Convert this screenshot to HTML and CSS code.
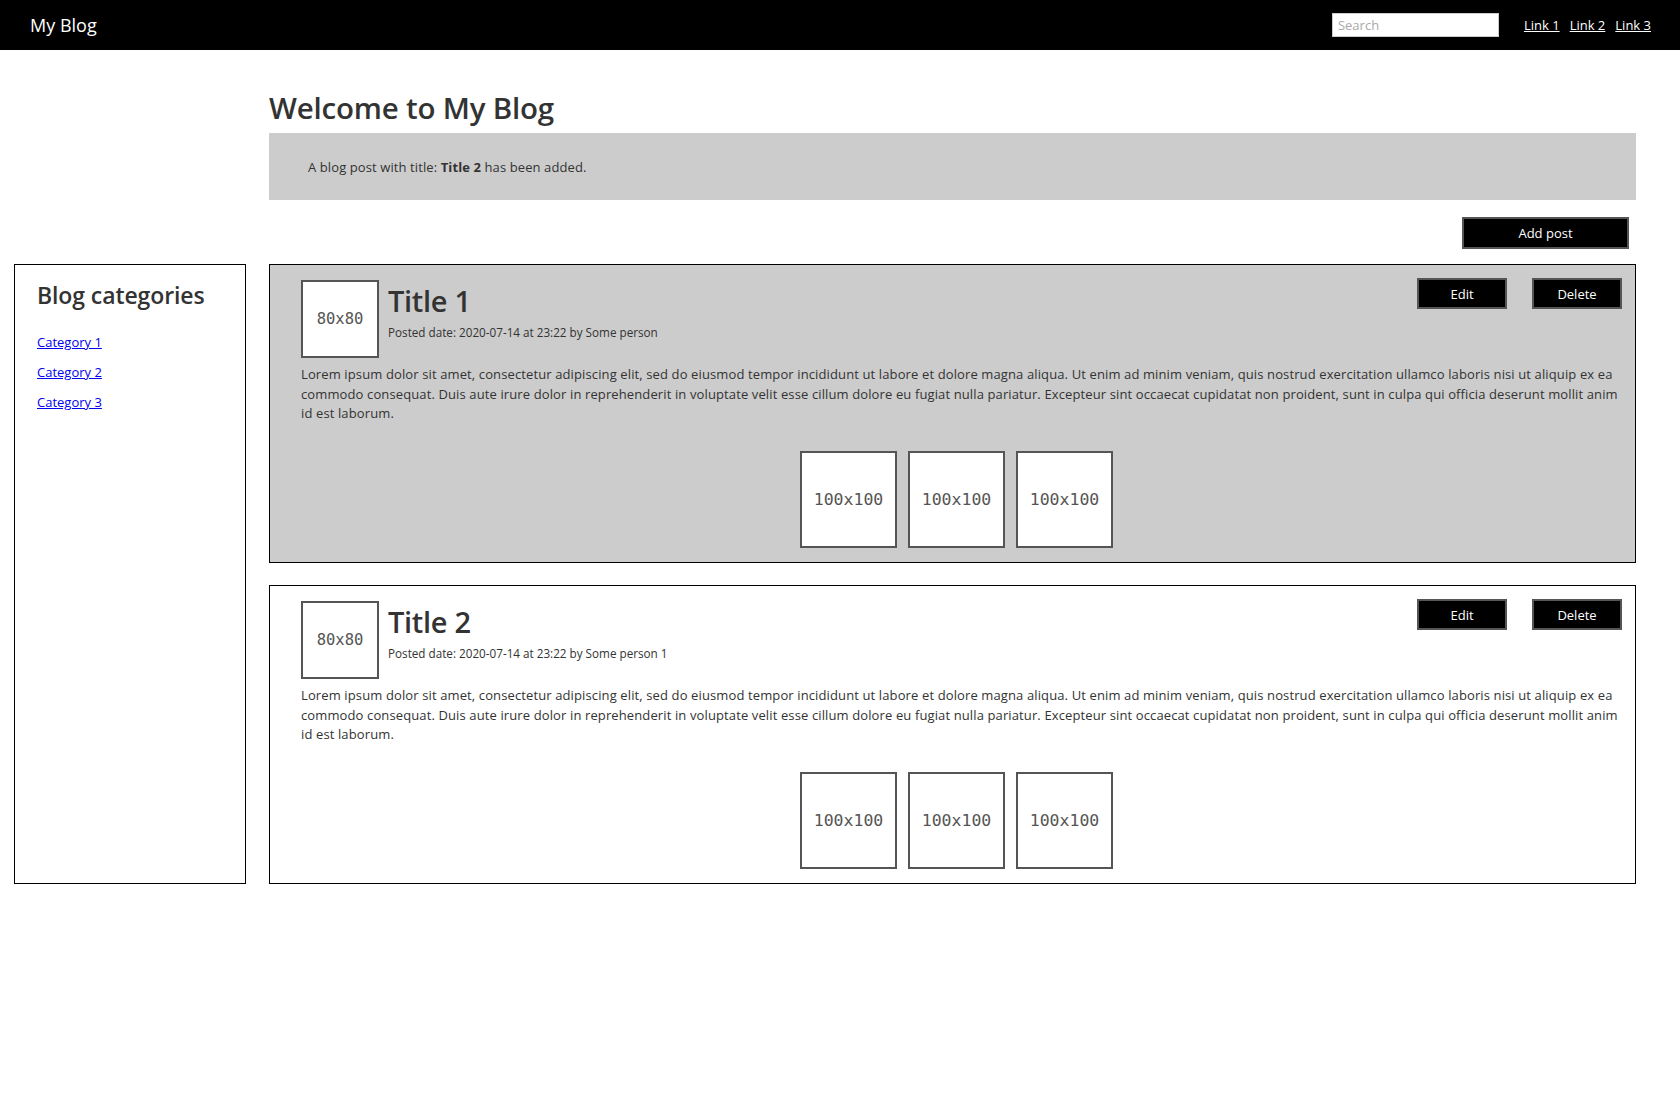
FILE: index.html
```html
<!DOCTYPE html>
<html lang="en">
<head>
<meta charset="utf-8">
<title>My Blog</title>
<link rel="stylesheet" href="styles.css">
</head>
<body>
<nav class="navbar">
  <a class="brand" href="#">My Blog</a>
  <div class="nav-right">
    <input class="search" type="text" placeholder="Search">
    <a class="nav-link" href="#">Link 1</a>
    <a class="nav-link" href="#">Link 2</a>
    <a class="nav-link" href="#">Link 3</a>
  </div>
</nav>
<div class="layout">
  <header class="page-head">
    <h1 class="page-title">Welcome to My Blog</h1>
    <div class="alert"><span>A blog post with title: <b>Title 2</b> has been added.</span></div>
    <div class="add-row"><button class="btn btn-add">Add post</button></div>
  </header>
  <aside class="sidebar">
    <h2 class="sidebar-title">Blog categories</h2>
    <ul class="cat-list">
      <li><a href="#">Category 1</a></li>
      <li><a href="#">Category 2</a></li>
      <li><a href="#">Category 3</a></li>
    </ul>
  </aside>
  <main class="posts">
    <article class="post post-active">
      <div class="post-head">
        <div class="thumb">80x80</div>
        <div class="post-meta">
          <h3 class="post-title">Title 1</h3>
          <div class="post-date">Posted date: 2020-07-14 at 23:22 by Some person</div>
        </div>
        <div class="post-actions">
          <button class="btn btn-small">Edit</button>
          <button class="btn btn-small">Delete</button>
        </div>
      </div>
      <p class="post-body">Lorem ipsum dolor sit amet, consectetur adipiscing elit, sed do eiusmod tempor incididunt ut labore et dolore magna aliqua. Ut enim ad minim veniam, quis nostrud exercitation ullamco laboris nisi ut aliquip ex ea commodo consequat. Duis aute irure dolor in reprehenderit in voluptate velit esse cillum dolore eu fugiat nulla pariatur. Excepteur sint occaecat cupidatat non proident, sunt in culpa qui officia deserunt mollit anim id est laborum.</p>
      <div class="gallery">
        <div class="pic">100x100</div>
        <div class="pic">100x100</div>
        <div class="pic">100x100</div>
      </div>
    </article>
    <article class="post">
      <div class="post-head">
        <div class="thumb">80x80</div>
        <div class="post-meta">
          <h3 class="post-title">Title 2</h3>
          <div class="post-date">Posted date: 2020-07-14 at 23:22 by Some person 1</div>
        </div>
        <div class="post-actions">
          <button class="btn btn-small">Edit</button>
          <button class="btn btn-small">Delete</button>
        </div>
      </div>
      <p class="post-body">Lorem ipsum dolor sit amet, consectetur adipiscing elit, sed do eiusmod tempor incididunt ut labore et dolore magna aliqua. Ut enim ad minim veniam, quis nostrud exercitation ullamco laboris nisi ut aliquip ex ea commodo consequat. Duis aute irure dolor in reprehenderit in voluptate velit esse cillum dolore eu fugiat nulla pariatur. Excepteur sint occaecat cupidatat non proident, sunt in culpa qui officia deserunt mollit anim id est laborum.</p>
      <div class="gallery">
        <div class="pic">100x100</div>
        <div class="pic">100x100</div>
        <div class="pic">100x100</div>
      </div>
    </article>
  </main>
</div>
</body>
</html>
```
FILE: styles.css
```css
* { box-sizing: border-box; }
body {
  margin: 0;
  font-family: "Open Sans", "Noto Sans", sans-serif;
  color: #333;
  background: #fff;
}
.navbar {
  height: 50px;
  background: #000;
  display: flex;
  align-items: center;
  justify-content: space-between;
  padding: 0 29px 0 30px;
}
.brand {
  color: #fff;
  text-decoration: none;
  font-size: 18px;
  line-height: 1;
}
.nav-right {
  display: flex;
  align-items: center;
  gap: 10px;
}
.search {
  width: 167px;
  height: 24px;
  border: 1px solid #ccc;
  padding: 0 5px;
  font-family: inherit;
  font-size: 13px;
  margin-right: 15px;
  outline: none;
}
.search::placeholder { color: #aaa; }
.nav-link {
  color: #fff;
  font-size: 13px;
}
.layout {
  display: grid;
  grid-template-columns: 232px 1fr;
  column-gap: 23px;
  padding: 0 44px 40px 14px;
}
.page-head { grid-column: 2; }
.page-title {
  margin: 0;
  padding-top: 33px;
  font-size: 29.5px;
  font-weight: 600;
  line-height: 50px;
  letter-spacing: -0.2px;
}
.alert {
  background: #ccc;
  height: 67px;
  padding-left: 39px;
  display: flex;
  align-items: center;
  font-size: 13px;
  letter-spacing: 0.1px;
}
.add-row {
  display: flex;
  justify-content: flex-end;
  padding: 17px 7px 15px 0;
}
.btn {
  background: #000;
  color: #fff;
  border: 2px solid #555;
  font-family: inherit;
  font-size: 13px;
  cursor: pointer;
}
.btn-add { width: 167px; height: 32px; }
.sidebar {
  border: 1px solid #000;
  padding: 14px 22px;
}
.sidebar-title {
  margin: 0;
  font-size: 23px;
  font-weight: 600;
  line-height: 32px;
  letter-spacing: -0.1px;
}
.cat-list {
  list-style: none;
  margin: 16px 0 0;
  padding: 0;
}
.cat-list li {
  font-size: 13px;
  line-height: 30px;
}
.cat-list a { color: #00e; }
.posts {
  display: flex;
  flex-direction: column;
  gap: 22px;
}
.post {
  border: 1px solid #000;
  height: 299px;
  padding: 14px 13px 14px 31px;
  display: flex;
  flex-direction: column;
}
.post-active { background: #ccc; }
.post-head {
  display: flex;
  align-items: flex-start;
}
.thumb {
  width: 78px;
  height: 78px;
  border: 2px solid #555;
  background: #fff;
  display: flex;
  align-items: center;
  justify-content: center;
  font-family: "DejaVu Sans Mono", "Liberation Mono", monospace;
  font-size: 15.5px;
  color: #555;
  margin-top: 1px;
}
.post-meta {
  flex: 1;
  margin-left: 9px;
}
.post-title {
  margin: 0;
  font-size: 29px;
  font-weight: 600;
  line-height: 40px;
  padding-top: 2px;
  letter-spacing: -0.3px;
}
.post-date {
  font-size: 11.7px;
  margin-top: 3px;
}
.post-actions {
  display: flex;
  gap: 25px;
  margin-top: -1px;
}
.btn-small { width: 90px; height: 31px; }
.post-body {
  margin: 7px 0 0;
  font-size: 13px;
  line-height: 19.5px;
  letter-spacing: 0.12px;
}
.gallery {
  margin-top: auto;
  display: flex;
  justify-content: center;
  gap: 11px;
  padding-right: 10px;
}
.pic {
  width: 97px;
  height: 97px;
  border: 2px solid #555;
  background: #fff;
  display: flex;
  align-items: center;
  justify-content: center;
  font-family: "DejaVu Sans Mono", "Liberation Mono", monospace;
  font-size: 16.5px;
  color: #555;
}
```
